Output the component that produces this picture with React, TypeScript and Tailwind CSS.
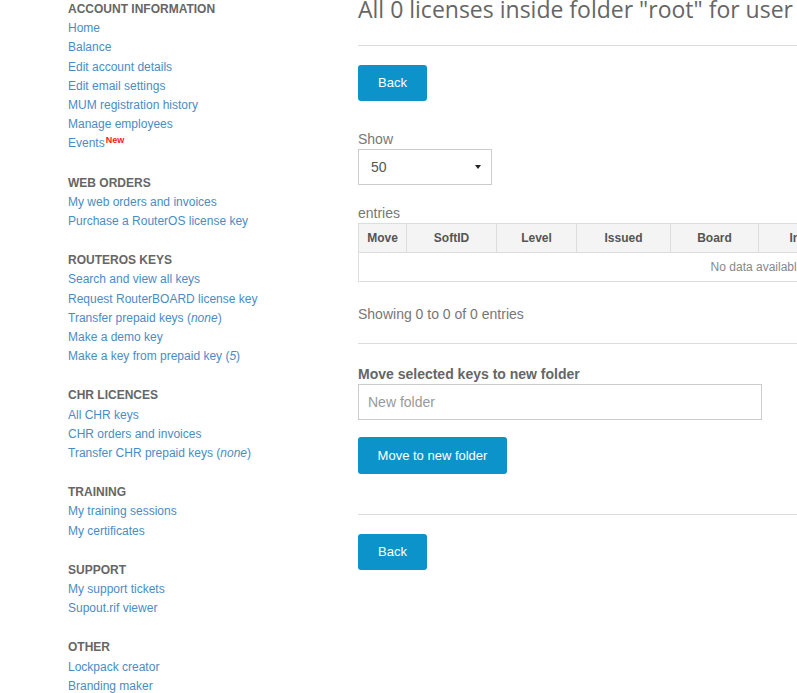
import React from "react"

const sections: { title: string; links: React.ReactNode[] }[] = [
  {
    title: "ACCOUNT INFORMATION",
    links: [
      "Home",
      "Balance",
      "Edit account details",
      "Edit email settings",
      "MUM registration history",
      "Manage employees",
      <>
        Events
        <sup className="ml-px text-[9px] font-bold text-[#ff2020]">New</sup>
      </>,
    ],
  },
  {
    title: "WEB ORDERS",
    links: ["My web orders and invoices", "Purchase a RouterOS license key"],
  },
  {
    title: "ROUTEROS KEYS",
    links: [
      "Search and view all keys",
      "Request RouterBOARD license key",
      <>
        Transfer prepaid keys (<i>none</i>)
      </>,
      "Make a demo key",
      <>
        Make a key from prepaid key (<i>5</i>)
      </>,
    ],
  },
  {
    title: "CHR LICENCES",
    links: [
      "All CHR keys",
      "CHR orders and invoices",
      <>
        Transfer CHR prepaid keys (<i>none</i>)
      </>,
    ],
  },
  {
    title: "TRAINING",
    links: ["My training sessions", "My certificates"],
  },
  {
    title: "SUPPORT",
    links: ["My support tickets", "Supout.rif viewer"],
  },
  {
    title: "OTHER",
    links: ["Lockpack creator", "Branding maker"],
  },
]

const columns = [
  { name: "Move", w: "w-[48px]" },
  { name: "SoftID", w: "w-[90px]" },
  { name: "Level", w: "w-[80px]" },
  { name: "Issued", w: "w-[94px]" },
  { name: "Board", w: "w-[88px]" },
  { name: "Info", w: "w-[84px]" },
  { name: "Comment", w: "w-[200px]" },
  { name: "Actions", w: "" },
]

function BlueButton({ children, className = "" }: { children: React.ReactNode; className?: string }) {
  return (
    <button
      type="button"
      className={`rounded-[3px] bg-[#0b93ca] text-[13px] leading-[20px] text-white ${className}`}
    >
      {children}
    </button>
  )
}

export default function App() {
  return (
    <div className="h-[693px] w-full overflow-hidden bg-white font-['Liberation_Sans',Arial,sans-serif]">
      <div className="flex pl-[68px]">
        {/* Sidebar */}
        <aside className="w-[290px] shrink-0 text-[12px] leading-[19.2px]">
          {sections.map((s) => (
            <div key={s.title} className="mb-5">
              <div className="font-bold text-[#666]">{s.title}</div>
              <ul>
                {s.links.map((l, i) => (
                  <li key={i} className="text-[#4a8cc6]">
                    {l}
                  </li>
                ))}
              </ul>
            </div>
          ))}
        </aside>

        {/* Main */}
        <main className="w-[840px] shrink-0 text-[14px] leading-[20px] text-[#777]">
          <h1 className="-mt-[6px] whitespace-nowrap font-['Open_Sans',sans-serif] text-[23px] leading-[30px] text-[#666]">
            All 0 licenses inside folder "root" for user
          </h1>
          <hr className="mt-[21px] border-t border-[#ddd]" />

          <BlueButton className="mt-[19px] h-[36px] w-[69px]">Back</BlueButton>

          <div className="mt-[28px]">Show</div>
          <div className="flex h-[36px] w-[134px] items-center justify-between border border-[#ccc] pl-[12px] pr-[10px] text-[#555]">
            <span>50</span>
            <span className="h-0 w-0 border-x-[3px] border-t-[4px] border-x-transparent border-t-[#222]" />
          </div>

          <div className="mt-[18px]">entries</div>
          <table className="w-full border-collapse border border-[#ddd] text-[12px]">
            <thead>
              <tr className="h-[29px] bg-[#f4f4f4]">
                {columns.map((c) => (
                  <th key={c.name} className={`border border-[#ddd] px-2 text-center font-bold text-[#555] ${c.w}`}>
                    {c.name}
                  </th>
                ))}
              </tr>
            </thead>
            <tbody>
              <tr className="h-[29px]">
                <td colSpan={columns.length} className="text-center text-[#888]">
                  No data available in table
                </td>
              </tr>
            </tbody>
          </table>

          <div className="mt-[22px]">Showing 0 to 0 of 0 entries</div>
          <hr className="mt-[19px] border-t border-[#ddd]" />

          <div className="mt-[20px] font-bold text-[#666]">Move selected keys to new folder</div>
          <input
            placeholder="New folder"
            className="block h-[36px] w-[404px] border border-[#ccc] px-[9px] text-[14px] text-[#555] outline-none placeholder:text-[#999]"
          />
          <BlueButton className="mt-[17px] h-[37px] w-[149px]">Move to new folder</BlueButton>

          <hr className="mt-[40px] border-t border-[#ddd]" />
          <BlueButton className="mt-[19px] h-[36px] w-[69px]">Back</BlueButton>
        </main>
      </div>
    </div>
  )
}
